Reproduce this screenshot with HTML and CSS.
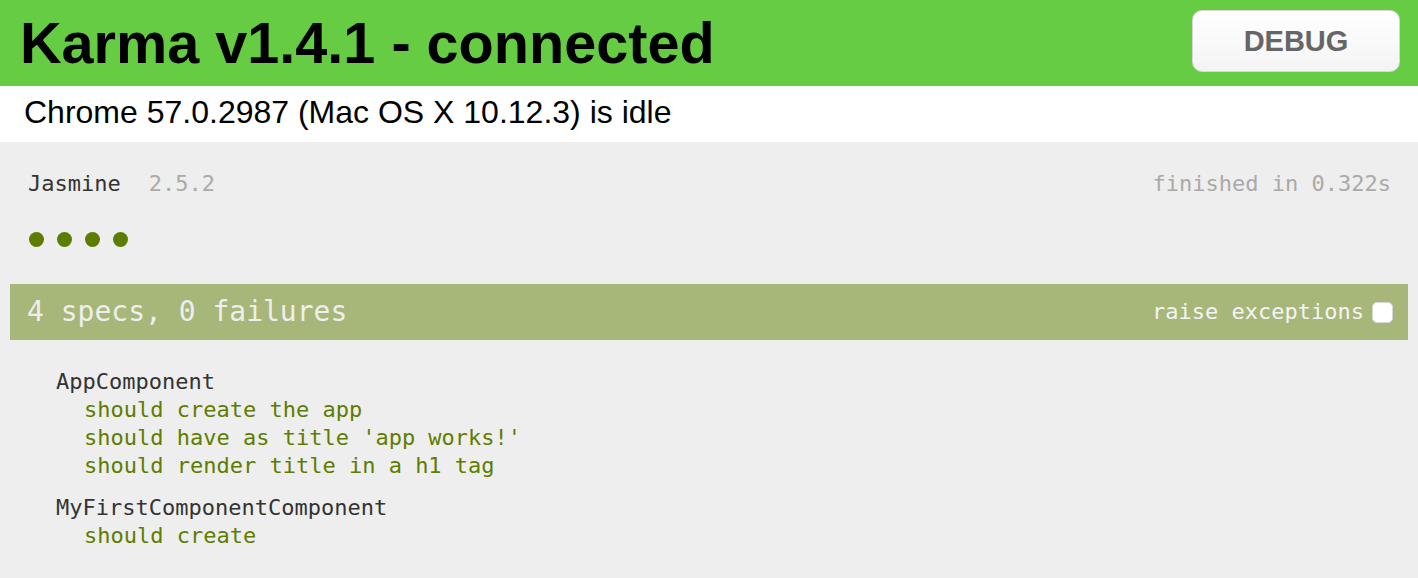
FILE: index.html
```html
<!DOCTYPE html>
<html>
<head>
<meta charset="utf-8">
<title>Karma</title>
<link rel="stylesheet" href="styles.css">
</head>
<body>
<div class="banner">
  <h1 class="title">Karma v1.4.1 - connected</h1>
  <button class="debug">DEBUG</button>
</div>
<div class="browsers">Chrome 57.0.2987 (Mac OS X 10.12.3) is idle</div>
<div class="reporter">
  <div class="jheader">
    <div class="jtitle"><span class="jname">Jasmine</span><span class="jversion">2.5.2</span></div>
    <div class="jduration">finished in 0.322s</div>
  </div>
  <div class="dots">
    <span class="dot"></span><span class="dot"></span><span class="dot"></span><span class="dot"></span>
  </div>
  <div class="bar">
    <span class="bar-text">4 specs, 0 failures</span>
    <label class="raise">raise exceptions<span class="checkbox"></span></label>
  </div>
  <div class="summary">
    <div class="suite">
      <div class="suite-name">AppComponent</div>
      <div class="spec">should create the app</div>
      <div class="spec">should have as title 'app works!'</div>
      <div class="spec">should render title in a h1 tag</div>
    </div>
    <div class="suite">
      <div class="suite-name">MyFirstComponentComponent</div>
      <div class="spec">should create</div>
    </div>
  </div>
</div>
</body>
</html>
```
FILE: styles.css
```css
html, body {
  margin: 0;
  padding: 0;
  height: 100%;
}
body {
  background: #eeeeee;
  font-family: "Liberation Sans", Arial, sans-serif;
}
.banner {
  height: 86px;
  background: #66cc44;
  display: flex;
  align-items: flex-start;
  justify-content: space-between;
}
.title {
  margin: 0;
  padding-left: 20px;
  font-size: 57.6px;
  line-height: 86px;
  font-weight: bold;
  color: #000;
}
.debug {
  margin: 10px 18px 0 0;
  width: 208px;
  height: 62px;
  border: 1px solid #d6d6d6;
  border-radius: 10px;
  background: linear-gradient(#ffffff, #f4f4f4);
  font-family: "Liberation Sans", Arial, sans-serif;
  font-weight: bold;
  font-size: 29px;
  color: #666666;
  padding: 0;
}
.browsers {
  height: 56px;
  box-sizing: border-box;
  background: #ffffff;
  padding: 0 0 4px 24px;
  font-size: 32px;
  line-height: 52px;
  color: #000;
}
.reporter {
  padding: 28px 10px 0;
  font-family: "DejaVu Sans Mono", "Liberation Mono", monospace;
  font-size: 22px;
  line-height: 28px;
  color: #333333;
}
.jheader {
  display: flex;
  justify-content: space-between;
  padding: 0 17px 0 18px;
}
.jversion {
  margin-left: 28px;
  color: #aaaaaa;
}
.jduration {
  color: #aaaaaa;
}
.dots {
  display: flex;
  gap: 13px;
  padding-left: 19px;
  margin-top: 34px;
  height: 15px;
}
.dot {
  width: 15px;
  height: 15px;
  border-radius: 50%;
  background: #5e7d00;
}
.bar {
  margin-top: 37px;
  height: 56px;
  background: #a6b779;
  display: flex;
  align-items: center;
  justify-content: space-between;
  padding: 0 15px 0 17px;
  color: #eeeeee;
}
.bar-text {
  font-size: 28px;
  line-height: 56px;
}
.raise {
  display: flex;
  align-items: center;
  gap: 8px;
  font-size: 22px;
  color: #f4f4f4;
}
.checkbox {
  width: 21px;
  height: 21px;
  box-sizing: border-box;
  background: #ffffff;
  border: 1px solid #d8d8d8;
  border-radius: 5px;
}
.summary {
  margin-top: 28px;
  padding-left: 46px;
}
.suite + .suite {
  margin-top: 14px;
}
.suite-name {
  color: #333333;
}
.spec {
  padding-left: 28px;
  color: #5e7d00;
}
```
